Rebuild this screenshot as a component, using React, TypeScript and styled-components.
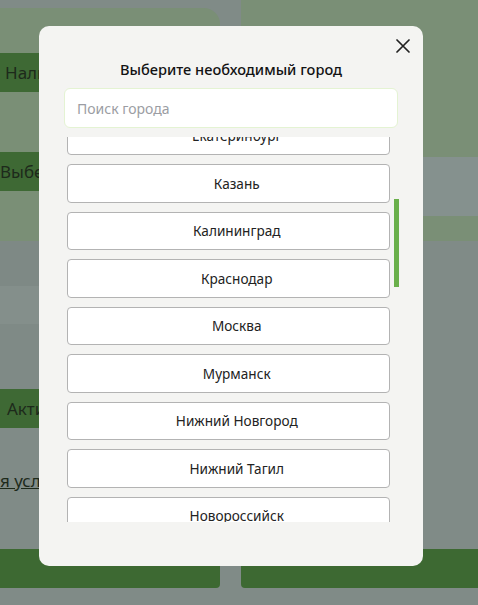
import { useEffect, useRef, useState } from "react";
import styled, { createGlobalStyle } from "styled-components";

const GlobalStyle = createGlobalStyle`
  html, body {
    margin: 0;
    padding: 0;
    height: 100%;
    overflow: hidden;
  }
  body {
    font-family: "Noto Sans", "Open Sans", sans-serif;
    background: #808b87;
  }
`;

const Page = styled.div`
  position: relative;
  width: 478px;
  height: 605px;
  overflow: hidden;
  display: grid;
  grid-template-columns: 220px 237px;
  column-gap: 21px;
  background: #808b87;
`;

const Column = styled.div`
  display: flex;
  flex-direction: column;
`;

const Card = styled.div`
  margin-top: 8px;
  height: 233px;
  background: #7a8f76;
  border-top-right-radius: 16px;
  display: flex;
  flex-direction: column;
  padding-top: 45px;
  gap: 60px;
  box-sizing: border-box;
`;

const Band = styled.div<{ $h: number; $bg: string }>`
  height: ${(p) => p.$h}px;
  background: ${(p) => p.$bg};
  flex-shrink: 0;
`;

const GreenButton = styled.div<{ $indent?: number }>`
  height: 39px;
  background: #3e6934;
  color: #1d2a1b;
  font-size: 17px;
  display: flex;
  align-items: center;
  padding-left: ${(p) => p.$indent ?? 5}px;
  white-space: nowrap;
  overflow: hidden;
  flex-shrink: 0;
`;

const TermsLink = styled.div`
  margin-top: 41px;
  height: 20px;
  font-size: 17px;
  color: #1d2a1b;
  text-decoration: underline;
  white-space: nowrap;
`;

const BottomButton = styled.div<{ $side: "left" | "right" }>`
  margin-top: ${(p) => (p.$side === "left" ? 60 : 308)}px;
  height: 39px;
  background: #3d6932;
  border-bottom-left-radius: ${(p) => (p.$side === "right" ? 4 : 0)}px;
  border-bottom-right-radius: ${(p) => (p.$side === "left" ? 4 : 0)}px;
  flex-shrink: 0;
`;

const Modal = styled.div`
  position: absolute;
  left: 39px;
  top: 26px;
  width: 384px;
  height: 540px;
  box-sizing: border-box;
  background: #f4f4f2;
  border-radius: 10px;
  padding: 33px 25px 0 25px;
  display: flex;
  flex-direction: column;
`;

const CloseButton = styled.button`
  position: absolute;
  top: 13px;
  right: 13px;
  width: 14px;
  height: 14px;
  padding: 0;
  border: none;
  background: transparent;
  display: flex;
  cursor: pointer;
`;

const Title = styled.h2`
  margin: 0;
  font-size: 14.6px;
  line-height: 20px;
  font-weight: 500;
  color: #121212;
  text-align: center;
`;

const Search = styled.input`
  margin-top: 9px;
  height: 40px;
  box-sizing: border-box;
  background: #fff;
  border: 1px solid #e4f3d3;
  border-radius: 6px;
  padding: 0 12px;
  font-family: inherit;
  font-size: 14px;
  color: #222;
  outline: none;
  &::placeholder {
    color: #9b9da3;
  }
`;

const ListArea = styled.div`
  position: relative;
  margin-top: 9px;
  margin-right: -1px;
  height: 385px;
`;

const List = styled.div`
  height: 100%;
  overflow-y: scroll;
  padding: 10px 9.5px 10px 3px;
  box-sizing: border-box;
  display: flex;
  flex-direction: column;
  gap: 9px;
  scrollbar-width: none;
  &::-webkit-scrollbar {
    display: none;
  }
`;

const ScrollThumb = styled.div`
  position: absolute;
  right: 0;
  width: 5px;
  background: #6ab04b;
`;

const CityItem = styled.button`
  flex-shrink: 0;
  height: 38.5px;
  box-sizing: border-box;
  background: #fff;
  border: 1px solid #b3b3b3;
  border-radius: 4px;
  padding: 0 0 0 17px;
  font-family: inherit;
  font-size: 13.6px;
  color: #222;
  text-align: center;
  cursor: pointer;
`;

const cities = [
  "Архангельск",
  "Барнаул",
  "Владивосток",
  "Волгоград",
  "Воронеж",
  "Екатеринбург",
  "Казань",
  "Калининград",
  "Краснодар",
  "Москва",
  "Мурманск",
  "Нижний Новгород",
  "Нижний Тагил",
  "Новороссийск",
  "Новосибирск",
  "Омск",
  "Оренбург",
  "Пенза",
  "Пермь",
  "Ростов-на-Дону",
  "Рязань",
  "Самара",
  "Санкт-Петербург",
  "Саратов",
  "Сочи",
  "Ставрополь",
  "Томск",
  "Тула",
  "Тюмень",
  "Ульяновск",
  "Уфа",
  "Хабаровск",
  "Челябинск",
  "Якутск",
  "Ярославль",
];

const CloseIcon = () => (
  <svg width="14" height="14" viewBox="0 0 14 14" fill="none">
    <path d="M1 1L13 13M13 1L1 13" stroke="#222" strokeWidth="1.7" strokeLinecap="round" />
  </svg>
);

const App = () => {
  const listRef = useRef<HTMLDivElement>(null);
  const [thumb, setThumb] = useState({ top: 0, height: 0 });

  const updateThumb = () => {
    const el = listRef.current;
    if (!el) return;
    const { scrollTop, scrollHeight, clientHeight } = el;
    const height = (clientHeight * clientHeight) / scrollHeight;
    const maxScroll = scrollHeight - clientHeight;
    const top = maxScroll > 0 ? (scrollTop / maxScroll) * (clientHeight - height) : 0;
    setThumb({ top, height });
  };

  useEffect(() => {
    if (listRef.current) listRef.current.scrollTop = 268;
    updateThumb();
  }, []);

  return (
    <>
      <GlobalStyle />
      <Page>
        <Column>
          <Card>
            <GreenButton>Наличие в аптеках</GreenButton>
            <GreenButton $indent={0}>Выберите аптеку</GreenButton>
          </Card>
          <Band $h={45} $bg="#7e8985" />
          <Band $h={38} $bg="#848f8b" />
          <Band $h={65} $bg="#7f8a86" />
          <GreenButton $indent={7}>Активировать</GreenButton>
          <TermsLink>я условия акции</TermsLink>
          <BottomButton $side="left" />
        </Column>
        <Column>
          <Band $h={157} $bg="#7a8f76" />
          <Band $h={59} $bg="#85918e" />
          <Band $h={25} $bg="#7a8f76" />
          <BottomButton $side="right" />
        </Column>

        <Modal>
          <CloseButton aria-label="Закрыть">
            <CloseIcon />
          </CloseButton>
          <Title>Выберите необходимый город</Title>
          <Search placeholder="Поиск города" />
          <ListArea>
            <List ref={listRef} onScroll={updateThumb}>
              {cities.map((city) => (
                <CityItem key={city}>{city}</CityItem>
              ))}
            </List>
            <ScrollThumb style={{ top: thumb.top, height: thumb.height }} />
          </ListArea>
        </Modal>
      </Page>
    </>
  );
};

export default App;
